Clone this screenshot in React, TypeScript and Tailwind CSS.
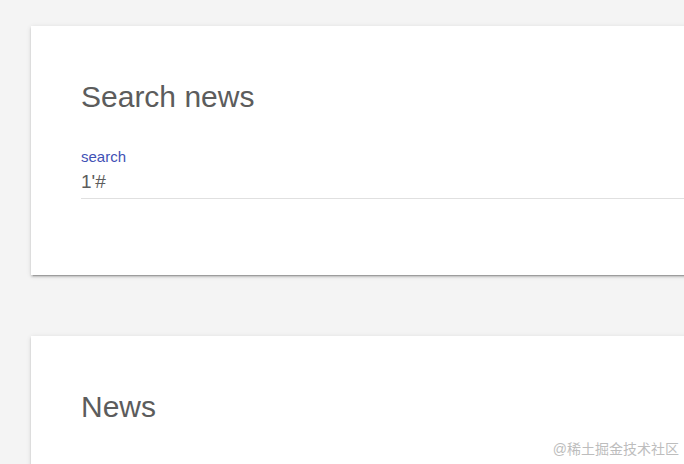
export default function App() {
  return (
    <div className="w-[684px] h-[464px] overflow-hidden bg-[#f4f4f4] relative font-['Liberation_Sans',Arial,sans-serif]">
      <div className="pt-[26px] pl-[31px] flex flex-col gap-[61px]">
        {/* Search card */}
        <section className="w-[700px] h-[249px] bg-white shadow-[0_2px_2px_0_rgba(0,0,0,0.14),0_3px_1px_-2px_rgba(0,0,0,0.2),0_1px_5px_0_rgba(0,0,0,0.12)] pl-[50px] pt-[53px]">
          <h2 className="text-[30px] leading-[36px] text-[#5c5c5c]">Search news</h2>
          <div className="mt-[33px]">
            <label className="block text-[15px] leading-[17px] text-[#3f51b5]">search</label>
            <div className="mt-[6px] border-b border-[#e0e0e0] pb-[5px] text-[19px] leading-[22px] text-[#5c5c5c]">
              1'#
            </div>
          </div>
        </section>

        {/* News card */}
        <section className="w-[700px] h-[200px] bg-white shadow-[0_2px_2px_0_rgba(0,0,0,0.14),0_3px_1px_-2px_rgba(0,0,0,0.2),0_1px_5px_0_rgba(0,0,0,0.12)] pl-[50px] pt-[53px]">
          <h2 className="text-[30px] leading-[36px] text-[#5c5c5c]">News</h2>
        </section>
      </div>

      <span className="absolute right-[5px] bottom-[4px] text-[14px] text-[#bdbdbd] font-['Liberation_Sans','Noto_Sans_CJK_SC',sans-serif]">
        @稀土掘金技术社区
      </span>
    </div>
  );
}
